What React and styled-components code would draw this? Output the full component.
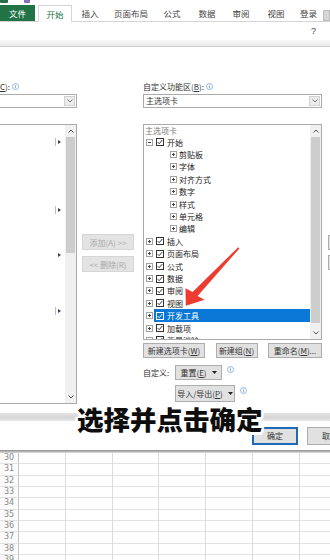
import React from 'react';
import styled, { createGlobalStyle } from 'styled-components';

const Global = createGlobalStyle`
  html, body { margin: 0; padding: 0; background: #fff; }
  body {
    width: 330px; height: 560px; overflow: hidden;
    font-family: "Noto Sans CJK SC", "Noto Sans", sans-serif;
    color: #333;
  }
  * { box-sizing: border-box; }
`;

const Page = styled.div`
  position: relative;
  width: 330px;
  height: 560px;
  overflow: hidden;
  background: #fff;
  display: flex;
  flex-direction: column;
`;

/* ---------- top of excel window ---------- */
const TitleStrip = styled.div`
  height: 5px;
  display: flex;
  align-items: flex-start;
  gap: 16px;
`;
const TitleBit = styled.div`
  width: ${p => p.w}px;
  height: 3px;
  background: ${p => p.c};
  border-radius: 0 0 1px 1px;
`;

const TabBar = styled.div`
  height: 17px;
  display: flex;
  align-items: flex-end;
  border-bottom: 1px solid #d5d5d5;
`;
const Tab = styled.div`
  width: ${p => p.w}px;
  margin-left: ${p => p.ml || 0}px;
  height: ${p => (p.active ? 17 : 16)}px;
  margin-bottom: ${p => (p.active ? -1 : 0)}px;
  display: flex;
  align-items: center;
  justify-content: center;
  font-size: 8.5px;
  color: ${p => (p.file ? '#fff' : p.active ? '#217346' : '#444')};
  background: ${p => (p.file ? '#217346' : '#fff')};
  border: ${p => (p.active ? '1px solid #d5d5d5' : 'none')};
  border-bottom: none;
`;
const Account = styled.div`
  width: 7px;
  height: 11px;
  background: #d6d6d6;
  border: 1px solid #bcbcbc;
`;

const DialogTitle = styled.div`
  height: 18px;
  display: flex;
  align-items: center;
  justify-content: flex-end;
  padding-right: 14px;
  font-size: 9px;
  font-family: "Liberation Sans", sans-serif;
  color: #444;
`;
const Band = styled.div`
  height: 7px;
  background: linear-gradient(#f7f7f7, #ebebeb);
  border-bottom: 1px solid #cdcdcd;
`;

/* ---------- dialog body ---------- */
const Body = styled.div`
  height: 366px;
  display: grid;
  grid-template-columns: 77px 66px 179px 8px;
  padding-top: 33px;
  overflow: hidden;
`;
const Col = styled.div`
  display: flex;
  flex-direction: column;
  min-width: 0;
`;
const Label = styled.div`
  height: 12px;
  display: flex;
  align-items: center;
  gap: 2px;
  font-size: 8px;
  color: #333;
  white-space: nowrap;
`;
const U = styled.span`
  text-decoration: underline;
`;
const Select = styled.div`
  margin-top: 2px;
  height: 14px;
  display: flex;
  border: 1px solid #ababab;
  border-left: ${p => (p.cut ? 'none' : '1px solid #ababab')};
  background: #fff;
`;
const SelectText = styled.div`
  flex: 1;
  padding-left: 2px;
  font-size: 8px;
  line-height: 12px;
  color: #333;
`;
const SelectArrow = styled.div`
  width: 11px;
  margin: 1px;
  background: #ececec;
  border: 1px solid #d2d2d2;
  display: flex;
  align-items: center;
  justify-content: center;
`;
const ListBox = styled.div`
  margin-top: 16px;
  height: ${p => p.h}px;
  display: flex;
  border: 1px solid #ababab;
  border-left: ${p => (p.cut ? 'none' : '1px solid #ababab')};
  background: #fff;
`;
const ListContent = styled.div`
  flex: 1;
  min-width: 0;
  overflow: hidden;
  display: flex;
  flex-direction: column;
`;
const Scrollbar = styled.div`
  width: 11px;
  background: #f0f0f0;
  display: flex;
  flex-direction: column;
`;
const ScrollArrow = styled.div`
  height: 12px;
  display: flex;
  align-items: center;
  justify-content: center;
`;
const ScrollThumb = styled.div`
  height: ${p => p.h}px;
  margin: 0 1px;
  background: #cdcdcd;
`;
const ScrollFill = styled.div`
  flex: 1;
`;

/* left list */
const CmdRow = styled.div`
  height: 11.3px;
  flex: none;
  display: flex;
  align-items: center;
  justify-content: flex-end;
  gap: 2px;
  padding-right: 4px;
`;
const Divider = styled.div`
  width: 1px;
  height: 8px;
  background: #b8b8d0;
`;
const SubArrow = styled.div`
  width: 0;
  height: 0;
  border-top: 2px solid transparent;
  border-bottom: 2px solid transparent;
  border-left: 3px solid #3a3a55;
`;

/* tree */
const TreeHead = styled.div`
  height: 11px;
  flex: none;
  font-size: 8px;
  line-height: 11px;
  color: #7a7a7a;
  padding-left: 1px;
`;
const TreeRow = styled.div`
  height: 12.4px;
  flex: none;
  display: flex;
  align-items: center;
  padding-left: ${p => (p.lvl ? 26 : 2)}px;
`;
const TreeItem = styled.div`
  flex: 1;
  height: 13px;
  margin-left: ${p => (p.lvl ? 2 : 1)}px;
  padding-left: ${p => (p.lvl ? 0 : 2)}px;
  display: flex;
  align-items: center;
  gap: 3px;
  font-size: 8px;
  white-space: nowrap;
  color: ${p => (p.sel ? '#fff' : '#222')};
  background: ${p => (p.sel ? '#0a78d6' : 'transparent')};
`;

/* buttons */
const Btn = styled.div`
  width: ${p => p.w}px;
  height: ${p => p.h || 15}px;
  flex: none;
  display: flex;
  align-items: center;
  justify-content: center;
  font-size: 8px;
  white-space: nowrap;
  color: ${p => (p.disabled ? '#a9a9a9' : '#333')};
  background: ${p => (p.disabled ? '#e3e3e3' : '#e1e1e1')};
  border: ${p => (p.primary ? '2px solid #2068b8' : p.disabled ? '1px solid #d6d6d6' : '1px solid #adadad')};
`;
const CaretWrap = styled.span`
  display: inline-flex;
  margin-left: 5px;
`;
const MidCol = styled(Col)`
  padding-top: 154px;
  padding-left: 5px;
  gap: 6px;
`;
const EdgeCol = styled(Col)`
  padding-top: 155px;
  padding-left: 6px;
  gap: 5px;
  overflow: hidden;
`;
const BtnRow = styled.div`
  margin-top: 3px;
  display: flex;
  justify-content: space-between;
`;
const OptRow = styled.div`
  margin-top: ${p => p.mt}px;
  padding-left: ${p => p.pl || 0}px;
  display: flex;
  align-items: center;
`;
const OptLabel = styled.div`
  width: 32px;
  font-size: 8px;
  color: #333;
`;
const InfoWrap = styled.div`
  margin-left: 5px;
  display: flex;
  align-items: center;
  margin-top: -6px;
`;

/* footer */
const Separator = styled.div`
  height: 8px;
  background: linear-gradient(#e4e4e4, #d6d6d6 60%, #e9e9e9);
`;
const Footer = styled.div`
  height: 29px;
  display: flex;
  align-items: center;
  gap: 9px;
  padding-left: 252px;
  overflow: hidden;
`;
const Shadow = styled.div`
  height: 3px;
  background: linear-gradient(#8c8c8c, #dedede);
`;

/* sheet */
const Sheet = styled.div`
  flex: 1;
  overflow: hidden;
  display: grid;
  grid-template-columns: 19px repeat(7, 46.8px);
  grid-auto-rows: 11.35px;
`;
const RowHead = styled.div`
  border-right: 1px solid #c4c4c4;
  border-bottom: 1px solid #e2e2e2;
  background: #fbfbfb;
  font-family: "DejaVu Sans", sans-serif;
  font-size: 8px;
  line-height: 10px;
  color: #8a8a8a;
  text-align: center;
`;
const Cell = styled.div`
  border-right: 1px solid #dcdcdc;
  border-bottom: 1px solid #e2e2e2;
`;

/* overlays */
const Caption = styled.div`
  position: absolute;
  left: 77px;
  top: 402px;
  font-family: "Noto Sans CJK SC", sans-serif;
  font-weight: 900;
  font-size: 26.5px;
  line-height: 34px;
  color: #0d0d0d;
  white-space: nowrap;
  text-shadow:
    2px 0 #fff, -2px 0 #fff, 0 2px #fff, 0 -2px #fff,
    1.5px 1.5px #fff, -1.5px 1.5px #fff, 1.5px -1.5px #fff, -1.5px -1.5px #fff,
    2.5px 1px #fff, -2.5px 1px #fff, 2.5px -1px #fff, -2.5px -1px #fff,
    1px 2.5px #fff, -1px 2.5px #fff, 1px -2.5px #fff, -1px -2.5px #fff;
`;
const ArrowSvg = styled.svg`
  position: absolute;
  left: 180px;
  top: 240px;
`;

/* ---------- icons ---------- */
const Chevron = ({ dir = 'down', color = '#555' }) => (
  <svg width="6" height="4" viewBox="0 0 6 4">
    <polyline
      points={dir === 'down' ? '0.5,0.5 3,3 5.5,0.5' : '0.5,3.5 3,1 5.5,3.5'}
      fill="none"
      stroke={color}
      strokeWidth="1"
    />
  </svg>
);
const Info = () => (
  <svg width="7" height="7" viewBox="0 0 7 7">
    <circle cx="3.5" cy="3.5" r="3" fill="none" stroke="#7ea6d8" strokeWidth="0.8" />
    <line x1="3.5" y1="3" x2="3.5" y2="5.3" stroke="#7ea6d8" strokeWidth="0.9" />
    <circle cx="3.5" cy="1.9" r="0.5" fill="#7ea6d8" />
  </svg>
);
const Caret = () => (
  <CaretWrap>
    <svg width="5" height="3" viewBox="0 0 5 3">
      <polygon points="0,0 5,0 2.5,3" fill="#222" />
    </svg>
  </CaretWrap>
);
const Check = ({ inv }) => (
  <svg width="8" height="8" viewBox="0 0 8 8" style={{ flex: 'none' }}>
    <rect x="0.5" y="0.5" width="7" height="7" fill={inv ? 'none' : '#fff'} stroke={inv ? '#fff' : '#333'} />
    <polyline points="1.7,4.1 3.2,5.7 6.3,2" fill="none" stroke={inv ? '#fff' : '#222'} strokeWidth="0.9" />
  </svg>
);
const Expander = ({ open }) => (
  <svg width="7" height="7" viewBox="0 0 7 7" style={{ flex: 'none' }}>
    <rect x="0.5" y="0.5" width="6" height="6" fill="#fff" stroke="#a3a3a3" />
    <line x1="2" y1="3.5" x2="5" y2="3.5" stroke="#444" />
    {!open && <line x1="3.5" y1="2" x2="3.5" y2="5" stroke="#444" />}
  </svg>
);

const tabs = [
  { t: '文件', w: 35, file: true },
  { t: '开始', w: 34, ml: 3, active: true },
  { t: '插入', w: 36 },
  { t: '页面布局', w: 46 },
  { t: '公式', w: 36 },
  { t: '数据', w: 34 },
  { t: '审阅', w: 34 },
  { t: '视图', w: 36 },
  { t: '登录', w: 29 },
];

const tree = [
  { t: '开始', open: true },
  { t: '剪贴板', lvl: 1 },
  { t: '字体', lvl: 1 },
  { t: '对齐方式', lvl: 1 },
  { t: '数字', lvl: 1 },
  { t: '样式', lvl: 1 },
  { t: '单元格', lvl: 1 },
  { t: '编辑', lvl: 1 },
  { t: '插入' },
  { t: '页面布局' },
  { t: '公式' },
  { t: '数据' },
  { t: '审阅' },
  { t: '视图' },
  { t: '开发工具', sel: true },
  { t: '加载项' },
  { t: '背景消除' },
];

const markers = { 1: true, 7: true, 11: false, 16: true };
const sheetRows = [30, 31, 32, 33, 34, 35, 36, 37, 38, 39];

export default function App() {
  return (
    <Page>
      <Global />
      <TitleStrip>
        <TitleBit w={8} c="#2a6e45" />
        <TitleBit w={6} c="#8a6cc0" />
      </TitleStrip>
      <TabBar>
        {tabs.map(tb => (
          <Tab key={tb.t} w={tb.w} ml={tb.ml} file={tb.file} active={tb.active}>
            {tb.t}
          </Tab>
        ))}
        <Account />
      </TabBar>
      <DialogTitle>?</DialogTitle>
      <Band />

      <Body>
        <Col>
          <Label>
            <span><U>C</U>):</span>
            <Info />
          </Label>
          <Select cut>
            <SelectText />
            <SelectArrow><Chevron color="#777" /></SelectArrow>
          </Select>
          <ListBox h={280} cut>
            <ListContent>
              {Array.from({ length: 24 }).map((_, i) => (
                <CmdRow key={i}>
                  {i in markers && markers[i] && <Divider />}
                  {i in markers && <SubArrow />}
                </CmdRow>
              ))}
            </ListContent>
            <Scrollbar>
              <ScrollArrow><Chevron dir="up" /></ScrollArrow>
              <ScrollThumb h={116} />
              <ScrollFill />
              <ScrollArrow><Chevron /></ScrollArrow>
            </Scrollbar>
          </ListBox>
        </Col>

        <MidCol>
          <Btn w={52} h={16} disabled><span>添加(A) &gt;&gt;</span></Btn>
          <Btn w={52} h={16} disabled><span>&lt;&lt; 删除(R)</span></Btn>
        </MidCol>

        <Col>
          <Label>
            <span>自定义功能区(<U>B</U>):</span>
            <Info />
          </Label>
          <Select>
            <SelectText>主选项卡</SelectText>
            <SelectArrow><Chevron color="#777" /></SelectArrow>
          </Select>
          <ListBox h={216}>
            <ListContent>
              <TreeHead>主选项卡</TreeHead>
              {tree.map(n => (
                <TreeRow key={n.t} lvl={n.lvl}>
                  <Expander open={n.open} />
                  <TreeItem lvl={n.lvl} sel={n.sel}>
                    {!n.lvl && <Check inv={n.sel} />}
                    <span>{n.t}</span>
                  </TreeItem>
                </TreeRow>
              ))}
            </ListContent>
            <Scrollbar>
              <ScrollArrow><Chevron dir="up" /></ScrollArrow>
              <ScrollThumb h={186} />
              <ScrollFill />
              <ScrollArrow><Chevron /></ScrollArrow>
            </Scrollbar>
          </ListBox>
          <BtnRow>
            <Btn w={62}><span>新建选项卡(<U>W</U>)</span></Btn>
            <Btn w={42}><span>新建组(<U>N</U>)</span></Btn>
            <Btn w={54}><span>重命名(<U>M</U>)...</span></Btn>
          </BtnRow>
          <OptRow mt={7}>
            <OptLabel>自定义:</OptLabel>
            <Btn w={47}><span>重置(<U>E</U>)</span><Caret /></Btn>
            <InfoWrap><Info /></InfoWrap>
          </OptRow>
          <OptRow mt={5} pl={32}>
            <Btn w={60} h={17}><span>导入/导出(<U>P</U>)</span><Caret /></Btn>
            <InfoWrap><Info /></InfoWrap>
          </OptRow>
        </Col>

        <EdgeCol>
          <Btn w={20} h={15} />
          <Btn w={20} h={15} />
        </EdgeCol>
      </Body>

      <Separator />
      <Footer>
        <Btn w={46} h={18} primary>确定</Btn>
        <Btn w={46} h={18}>取消</Btn>
      </Footer>
      <Shadow />

      <Sheet>
        {sheetRows.map(r => (
          <React.Fragment key={r}>
            <RowHead>{r}</RowHead>
            {Array.from({ length: 7 }).map((_, c) => <Cell key={c} />)}
          </React.Fragment>
        ))}
      </Sheet>

      <ArrowSvg width="64" height="72" viewBox="0 0 64 72">
        <polygon
          points="58.2,7.2 59.4,8.4 17.6,56 24.5,59.8 5.8,65.8 5.5,48.2 12.6,52"
          fill="#ee3b2f"
        />
      </ArrowSvg>
      <Caption>选择并点击确定</Caption>
    </Page>
  );
}
